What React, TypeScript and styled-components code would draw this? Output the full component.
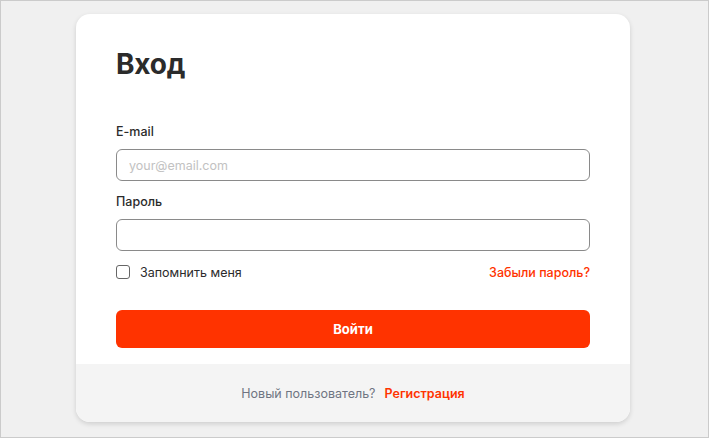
import React from "react";
import styled, { createGlobalStyle } from "styled-components";

const GlobalStyle = createGlobalStyle`
  html, body {
    margin: 0;
    padding: 0;
    height: 100%;
  }
  body {
    font-family: Inter, "Noto Sans", sans-serif;
    background: #f0f0f0;
  }
  #root {
    height: 100%;
  }
`;

const App = () => {
  return (
    <>
      <GlobalStyle />
      <Page>
        <Card>
          <Body>
            <Title>Вход</Title>
            <Field>
              <Label>E-mail</Label>
              <Input type="email" placeholder="your@email.com" />
            </Field>
            <Field>
              <Label>Пароль</Label>
              <Input type="password" />
            </Field>
            <OptionsRow>
              <Remember>
                <Checkbox type="checkbox" />
                Запомнить меня
              </Remember>
              <Link href="#">Забыли пароль?</Link>
            </OptionsRow>
            <SubmitButton>Войти</SubmitButton>
          </Body>
          <Footer>
            <Muted>Новый пользователь?</Muted>
            <Link href="#" $strong>
              Регистрация
            </Link>
          </Footer>
        </Card>
      </Page>
    </>
  );
};

export default App;

const Page = styled.div`
  box-sizing: border-box;
  height: 100%;
  border: 1px solid #cbcbcb;
  background: #f0f0f0;
  padding: 13px 0 0 75px;
`;

const Card = styled.div`
  width: 554px;
  background: #ffffff;
  border-radius: 14px;
  overflow: hidden;
  box-shadow: 0 2px 5px rgba(0, 0, 0, 0.14);
`;

const Body = styled.div`
  display: flex;
  flex-direction: column;
  padding: 33px 40px 16px;
`;

const Title = styled.h1`
  margin: 0 0 42px;
  font-size: 28px;
  line-height: 34px;
  font-weight: 700;
  color: #2b2b2b;
  letter-spacing: -0.2px;
`;

const Field = styled.div`
  display: flex;
  flex-direction: column;
  gap: 8px;
  margin-bottom: 12px;
`;

const Label = styled.label`
  font-size: 12.5px;
  line-height: 18px;
  font-weight: 500;
  color: #2b2b2b;
`;

const Input = styled.input`
  box-sizing: border-box;
  height: 32px;
  width: 100%;
  border: 1px solid #8a8a8a;
  border-radius: 6px;
  padding: 0 12px;
  font-family: inherit;
  font-size: 12.5px;
  color: #2b2b2b;
  outline: none;

  &::placeholder {
    color: #c2c2c2;
  }
`;

const OptionsRow = styled.div`
  display: flex;
  align-items: center;
  justify-content: space-between;
  height: 18px;
  margin: 0 0 29px;
`;

const Remember = styled.label`
  display: flex;
  align-items: center;
  gap: 10px;
  font-size: 12.5px;
  color: #2b2b2b;
`;

const Checkbox = styled.input`
  appearance: none;
  margin: 0;
  width: 14px;
  height: 14px;
  border: 1.5px solid #666;
  border-radius: 3px;
  background: #fff;
  box-sizing: border-box;
`;

const Link = styled.a<{ $strong?: boolean }>`
  font-size: 12.5px;
  font-weight: ${(p) => (p.$strong ? 600 : 500)};
  color: #ff3300;
  text-decoration: none;
`;

const SubmitButton = styled.button`
  height: 38px;
  width: 100%;
  border: none;
  border-radius: 6px;
  background: #ff3300;
  color: #ffffff;
  font-family: inherit;
  font-size: 13px;
  font-weight: 700;
`;

const Footer = styled.div`
  display: flex;
  align-items: center;
  justify-content: center;
  gap: 9px;
  height: 58px;
  background: #f4f4f4;
`;

const Muted = styled.span`
  font-size: 12.5px;
  color: #6f7482;
`;
